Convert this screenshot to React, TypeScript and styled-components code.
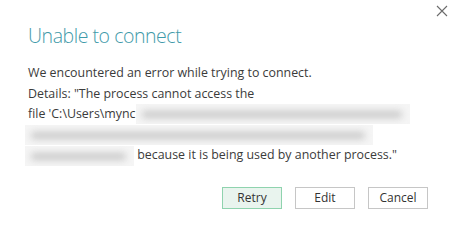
import React from "react";
import styled, { createGlobalStyle } from "styled-components";

const Global = createGlobalStyle`
  html, body { margin: 0; padding: 0; background: #fff; }
  body { font-family: "Open Sans", "Noto Sans", sans-serif; }
`;

const Dialog = styled.div`
  position: relative;
  width: 458px;
  height: 240px;
  box-sizing: border-box;
  padding: 22px 30px 0 28px;
  background: #fff;
  display: flex;
  flex-direction: column;
`;

const Close = styled.button`
  position: absolute;
  top: 4px;
  right: 10px;
  width: 13px;
  height: 13px;
  padding: 0;
  border: 0;
  background: transparent;
  display: flex;
  align-items: center;
  justify-content: center;
`;

const Title = styled.h1`
  margin: 0;
  font-family: "Open Sans", "Noto Sans", sans-serif;
  font-weight: 300;
  font-size: 19.5px;
  line-height: 28px;
  color: #3f9aa9;
  letter-spacing: -0.45px;
`;

const Message = styled.div`
  margin-top: 13px;
  font-size: 12.4px;
  line-height: 20.6px;
  color: #3b3b3b;
  display: flex;
  flex-direction: column;
`;

const Line = styled.div`
  white-space: nowrap;
  display: flex;
  align-items: center;
  height: 20.6px;
`;

const Redacted = styled.span<{ $w: number; $shift?: number }>`
  display: inline-block;
  width: ${(p) => p.$w}px;
  height: 20px;
  margin-left: ${(p) => p.$shift ?? 0}px;
  background: #f5f5f5;
  position: relative;
  overflow: hidden;
  &::after {
    content: "";
    position: absolute;
    left: 6px;
    right: 8px;
    top: 7px;
    height: 7px;
    background: #c8c8c8;
    filter: blur(3.5px);
    border-radius: 3px;
  }
`;

const Actions = styled.div`
  margin-top: 21px;
  display: flex;
  justify-content: flex-end;
  gap: 13px;
`;

const Button = styled.button<{ $primary?: boolean }>`
  width: 60px;
  height: 22px;
  box-sizing: border-box;
  padding: 0;
  font-family: "Open Sans", "Noto Sans", sans-serif;
  font-size: 12px;
  color: #333;
  background: ${(p) => (p.$primary ? "#e9f4ee" : "#fff")};
  border: 1px solid ${(p) => (p.$primary ? "#8fd3ae" : "#c6c6c6")};
  border-radius: 0;
`;

export default function App() {
  return (
    <>
      <Global />
      <Dialog>
        <Close aria-label="Close">
          <svg width="12" height="12" viewBox="0 0 12 12">
            <path d="M1 1 L11 11 M11 1 L1 11" stroke="#6b6b6b" strokeWidth="1.1" fill="none" />
          </svg>
        </Close>
        <Title>Unable to connect</Title>
        <Message>
          <Line>We encountered an error while trying to connect.</Line>
          <Line>Details: "The process cannot access the</Line>
          <Line>
            file 'C:\Users\mync
            <Redacted $w={274} />
          </Line>
          <Line>
            <Redacted $w={348} $shift={-3} />
          </Line>
          <Line>
            <Redacted $w={109} $shift={-3} />
            &nbsp;because it is being used by another process."
          </Line>
        </Message>
        <Actions>
          <Button $primary>Retry</Button>
          <Button>Edit</Button>
          <Button>Cancel</Button>
        </Actions>
      </Dialog>
    </>
  );
}
